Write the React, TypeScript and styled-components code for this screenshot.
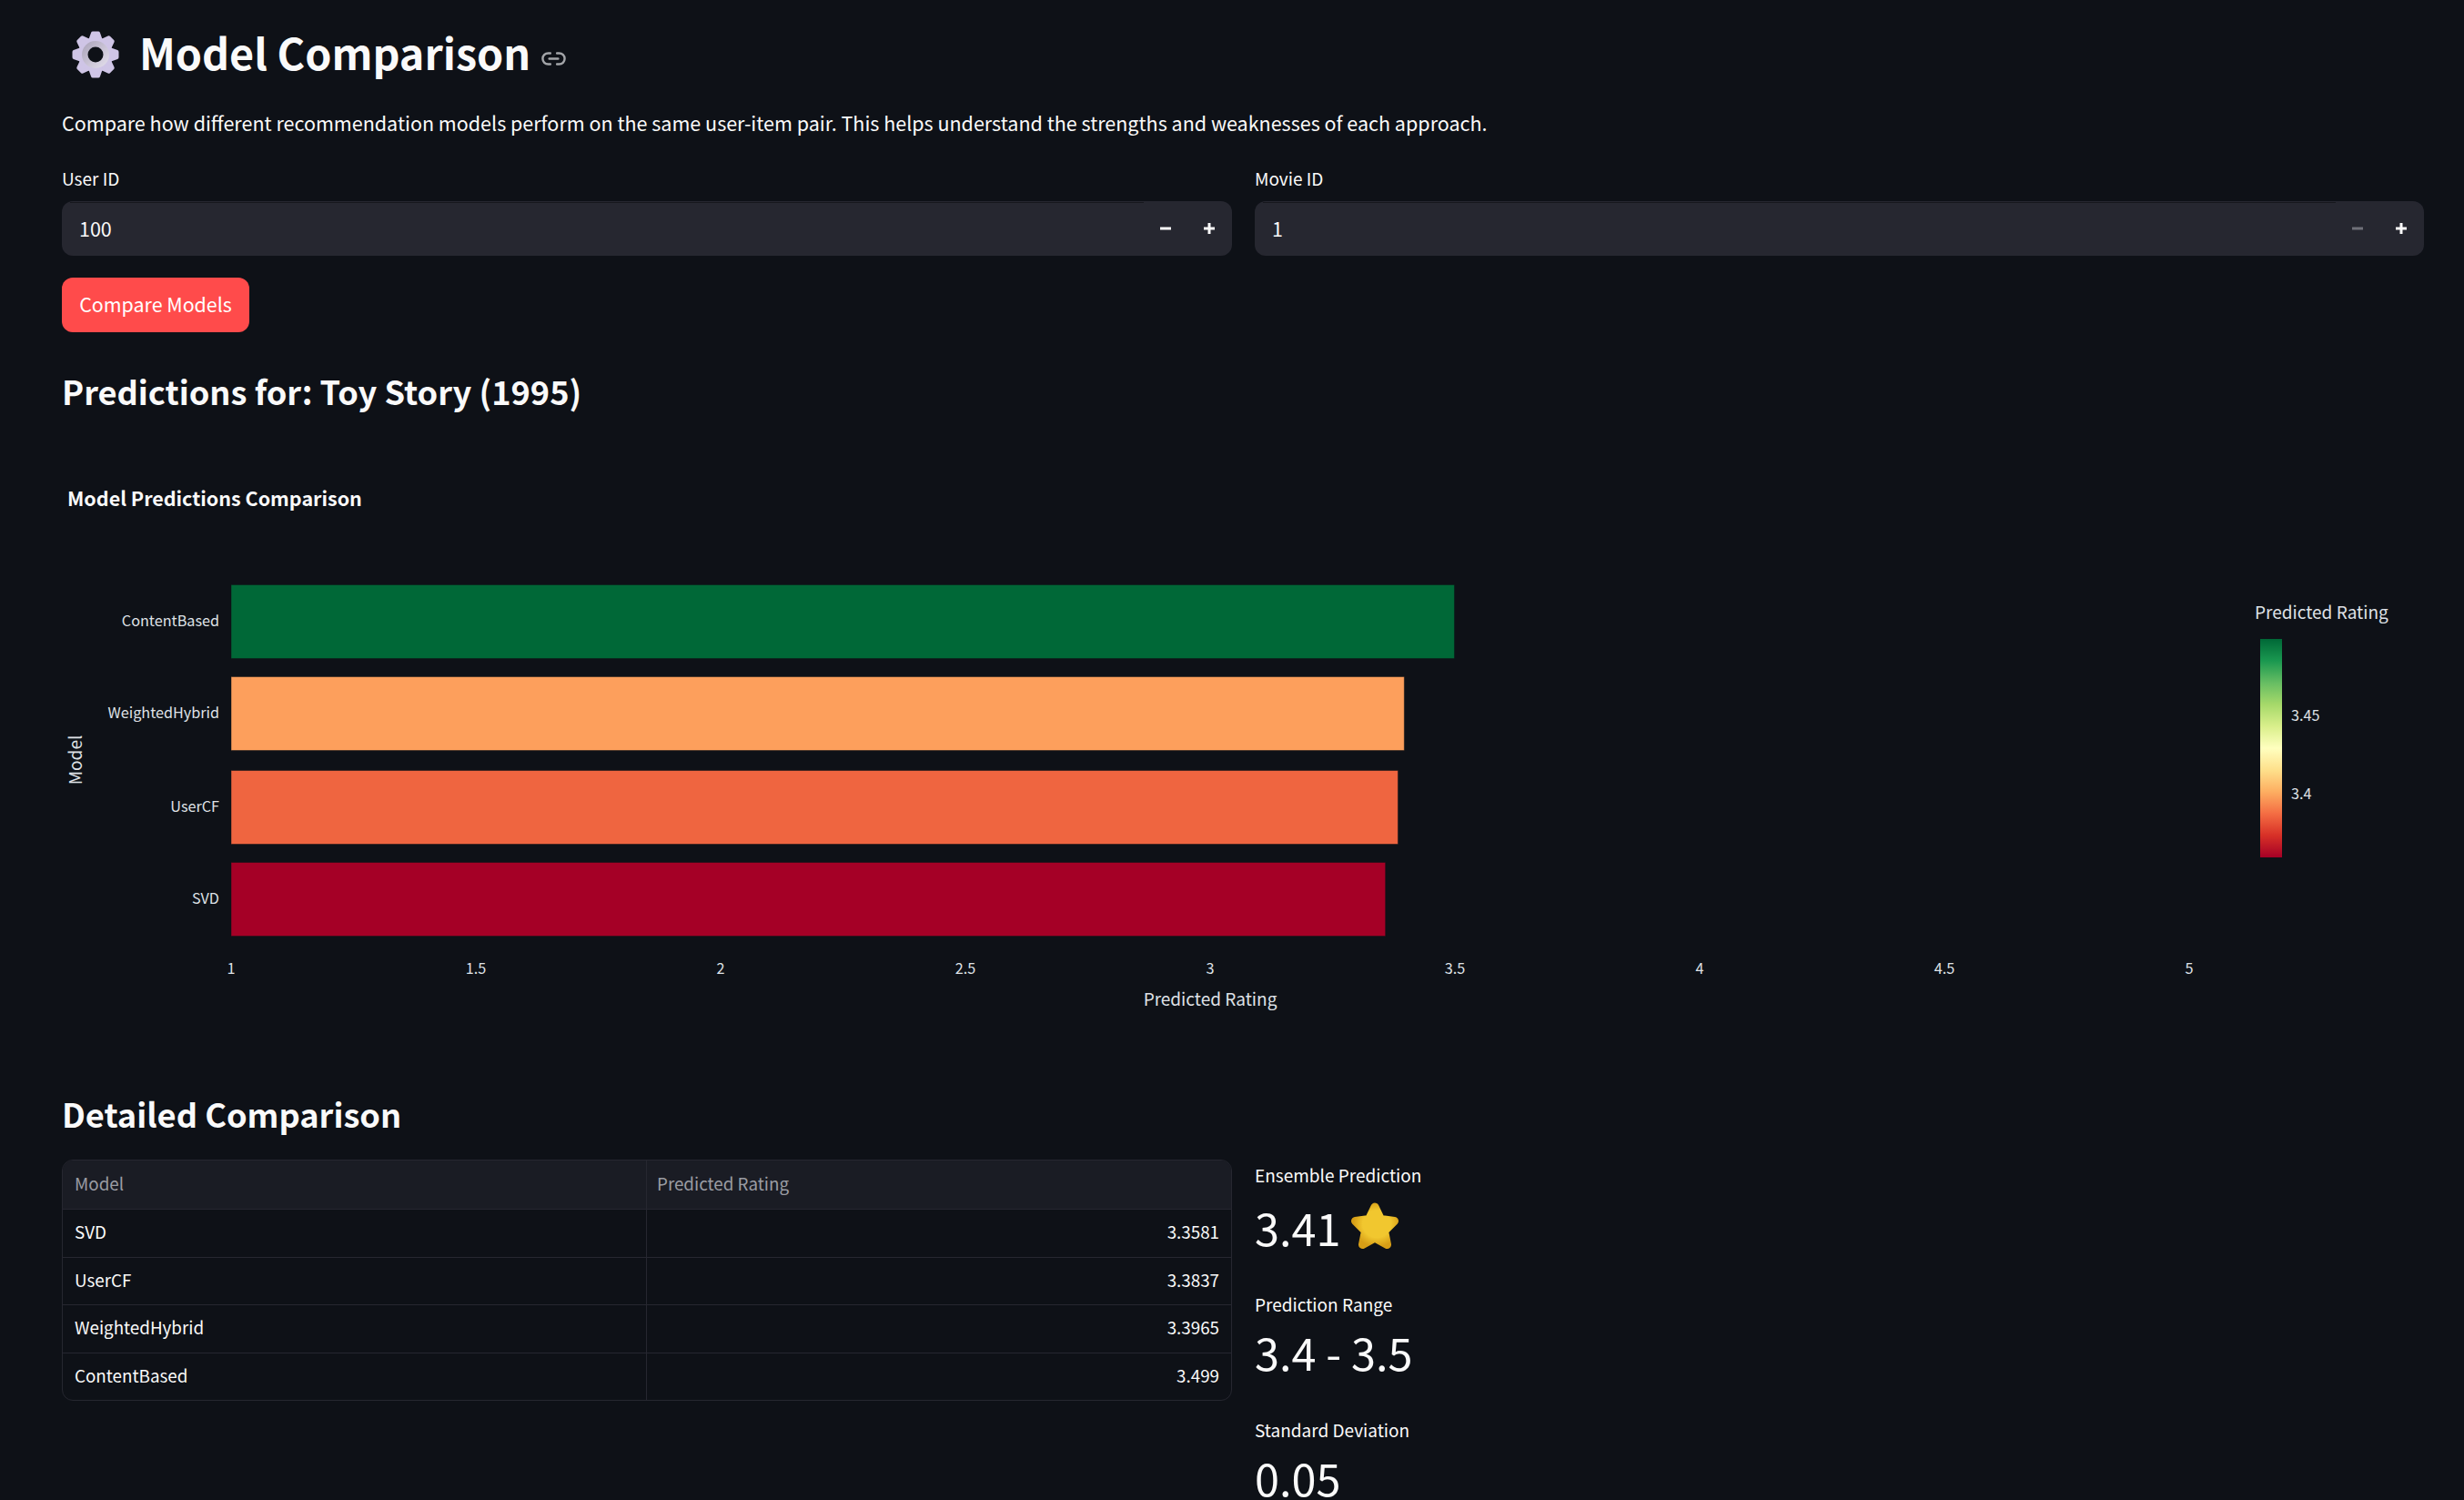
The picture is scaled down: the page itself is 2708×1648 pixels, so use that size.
import React from 'react'
import styled, { createGlobalStyle } from 'styled-components'
import { Link2 } from 'lucide-react'

const FONT = `"Noto Sans CJK SC", "Source Sans Pro", "Noto Sans", sans-serif`

const GlobalStyle = createGlobalStyle`
    html, body {
        margin: 0;
        height: 1648px;
        overflow: hidden;
        background: #0e1117;
    }
    body {
        color: #fafafa;
        font-family: ${FONT};
    }
`

const bars = [
    { name: 'ContentBased', value: 3.499, color: '#006837', top: 642 },
    { name: 'WeightedHybrid', value: 3.3965, color: '#fd9f5c', top: 743 },
    { name: 'UserCF', value: 3.3837, color: '#ef6540', top: 846 },
    { name: 'SVD', value: 3.3581, color: '#a50026', top: 947 },
]
const ticks = ['1', '1.5', '2', '2.5', '3', '3.5', '4', '4.5', '5']
const rows = [
    ['SVD', '3.3581'],
    ['UserCF', '3.3837'],
    ['WeightedHybrid', '3.3965'],
    ['ContentBased', '3.499'],
]
const legendStops = ['#006837', '#1a9850', '#66bd63', '#a6d96a', '#d9ef8b', '#ffffbf', '#fee08b', '#fdae61', '#f46d43', '#d73027', '#a50026']

const CHART_TOP = 500
const AXIS_X = (v: number) => 254 - 68 + (v - 1) * 538

function GearIcon() {
    return (
        <svg width="56" height="56" viewBox="-28 -28 56 56">
            <defs>
                <linearGradient id="ring" x1="0" y1="0" x2="1" y2="1">
                    <stop offset="0" stopColor="#a9a2b8" />
                    <stop offset="1" stopColor="#e6e1ee" />
                </linearGradient>
            </defs>
            <circle r="19" fill="#cdc2e4" />
            {[0, 45, 90, 135, 180, 225, 270, 315].map(a => (
                <polygon
                    key={a}
                    points="-6,-15 -3,-23.5 3,-23.5 6,-15"
                    fill="#cfc5e6"
                    stroke="#cfc5e6"
                    strokeWidth="4"
                    strokeLinejoin="round"
                    transform={`rotate(${a})`}
                />
            ))}
            <circle r="15" fill="url(#ring)" />
            <circle r="8.5" fill="#0e1117" />
        </svg>
    )
}

function StarIcon() {
    return (
        <svg width="56" height="56" viewBox="-28 -28 56 56">
            <defs>
                <radialGradient id="star" cx="0.55" cy="0.45" r="0.6">
                    <stop offset="0.6" stopColor="#f1c72f" />
                    <stop offset="1" stopColor="#d79e16" />
                </radialGradient>
            </defs>
            <polygon
                points="0,-22 6.5,-8.500 21.5,-6.500 10.5,4.500 13.5,19.500 0,12 -13.5,19.500 -10.5,4.500 -21.5,-6.500 -6.5,-8.500"
                fill="url(#star)"
                stroke="url(#star)"
                strokeWidth="9"
                strokeLinejoin="round"
            />
        </svg>
    )
}

function Chart() {
    return (
        <ChartSvg viewBox={`0 0 2596 640`} width="2596" height="640">
            <defs>
                <linearGradient id="legend" x1="0" y1="0" x2="0" y2="1">
                    {legendStops.map((c, i) => (
                        <stop key={c} offset={i / 10} stopColor={c} />
                    ))}
                </linearGradient>
            </defs>
            <ChartTitle x="6" y={548 - CHART_TOP + 8}>Model Predictions Comparison</ChartTitle>
            {bars.map(b => (
                <g key={b.name}>
                    <rect
                        x={AXIS_X(1)}
                        y={b.top - CHART_TOP + 0.5}
                        width={AXIS_X(b.value) - AXIS_X(1)}
                        height="81"
                        fill={b.color}
                        stroke="rgba(14,17,23,0.45)"
                        strokeWidth="1"
                    />
                    <TickText x={AXIS_X(1) - 13} y={b.top - CHART_TOP + 46} textAnchor="end">{b.name}</TickText>
                </g>
            ))}
            {ticks.map(t => (
                <TickText key={t} x={AXIS_X(Number(t))} y={1070 - CHART_TOP} textAnchor="middle">{t}</TickText>
            ))}
            <AxisText x={1262} y={1105 - CHART_TOP} textAnchor="middle">Predicted Rating</AxisText>
            <AxisText x={0} y={0} textAnchor="middle" transform={`translate(22 ${835 - CHART_TOP}) rotate(-90)`}>Model</AxisText>
            <AxisText x={2410} y={680 - CHART_TOP}>Predicted Rating</AxisText>
            <rect x={2416} y={702 - CHART_TOP} width="24" height="240" fill="url(#legend)" />
            <TickText x={2450} y={792 - CHART_TOP}>3.45</TickText>
            <TickText x={2450} y={878 - CHART_TOP}>3.4</TickText>
        </ChartSvg>
    )
}

function NumberField({ label, value, minusOff }: { label: string; value: string; minusOff?: boolean }) {
    return (
        <Field>
            <FieldLabel>{label}</FieldLabel>
            <InputBox>
                <InputValue>{value}</InputValue>
                <StepButton $off={minusOff}>
                    <svg width="12" height="12" viewBox="0 0 12 12"><rect x="0" y="4.5" width="12" height="3" fill="currentColor" /></svg>
                </StepButton>
                <StepButton>
                    <svg width="12" height="12" viewBox="0 0 12 12"><path d="M0 4.500h4.500V0h3v4.500H12v3H7.500V12h-3V7.500H0z" fill="currentColor" /></svg>
                </StepButton>
            </InputBox>
        </Field>
    )
}

export default function App() {
    return (
        <Page>
            <GlobalStyle />
            <TitleRow>
                <GearIcon />
                <Title>Model Comparison</Title>
                <LinkIcon><Link2 size={29} strokeWidth={2} /></LinkIcon>
            </TitleRow>
            <Intro>Compare how different recommendation models perform on the same user-item pair. This helps understand the strengths and weaknesses of each approach.</Intro>
            <Columns>
                <NumberField label="User ID" value="100" />
                <NumberField label="Movie ID" value="1" minusOff />
            </Columns>
            <CompareButton>Compare Models</CompareButton>
            <Heading>Predictions for: Toy Story (1995)</Heading>
            <Chart />
            <DetailHeading>Detailed Comparison</DetailHeading>
            <Columns>
                <Table>
                    <HeadRow>
                        <HeadCell>Model</HeadCell>
                        <HeadCell>Predicted Rating</HeadCell>
                    </HeadRow>
                    {rows.map(r => (
                        <BodyRow key={r[0]}>
                            <NameCell>{r[0]}</NameCell>
                            <NumCell>{r[1]}</NumCell>
                        </BodyRow>
                    ))}
                </Table>
                <Metrics>
                    <Metric>
                        <MetricLabel>Ensemble Prediction</MetricLabel>
                        <MetricValue $tall>3.41 <StarIcon /></MetricValue>
                    </Metric>
                    <Metric>
                        <MetricLabel>Prediction Range</MetricLabel>
                        <MetricValue>3.4 - 3.5</MetricValue>
                    </Metric>
                    <Metric>
                        <MetricLabel>Standard Deviation</MetricLabel>
                        <MetricValue>0.05</MetricValue>
                    </Metric>
                </Metrics>
            </Columns>
        </Page>
    )
}

const Page = styled.main`
    box-sizing: border-box;
    width: 2708px;
    height: 1648px;
    overflow: hidden;
    padding: 32px 44px 0 68px;
    background: #0e1117;
`
const TitleRow = styled.div`
    display: flex;
    align-items: center;
    height: 56px;
    padding-left: 9px;
`
const Title = styled.h1`
    margin: 0 0 0 20px;
    padding-bottom: 6px;
    font-size: 46.7px;
    font-weight: 600;
    line-height: 50px;
`
const LinkIcon = styled.span`
    display: flex;
    margin: 8px 0 0 11px;
    color: #a3a5a9;
`
const Intro = styled.p`
    margin: 31px 0 0;
    font-size: 21.5px;
    line-height: 32px;
`
const Columns = styled.div`
    display: grid;
    grid-template-columns: 1286px 1285px;
    gap: 25px;
`
const Field = styled.div`
    margin-top: 31px;
`
const FieldLabel = styled.div`
    font-size: 19px;
    line-height: 28px;
    margin-bottom: 11px;
`
const InputBox = styled.div`
    display: flex;
    align-items: center;
    height: 60px;
    padding-right: 1px;
    border-radius: 12px;
    background: #262730;
`
const InputValue = styled.span`
    flex: 1;
    display: flex;
    align-items: center;
    align-self: stretch;
    margin: 1px 0 0 9px;
    padding: 0 0 4px 10px;
    border-top: 1px solid #16171d;
    font-size: 21.5px;
`
const StepButton = styled.span<{ $off?: boolean }>`
    display: flex;
    align-items: center;
    justify-content: center;
    width: 48px;
    height: 60px;
    color: ${p => (p.$off ? '#6f7078' : '#fafafa')};
`
const CompareButton = styled.button`
    display: block;
    width: 206px;
    height: 60px;
    margin-top: 24px;
    padding: 0 0 3px;
    border: none;
    border-radius: 12px;
    background: #ff4b4b;
    color: #fff;
    font-family: ${FONT};
    font-size: 21.4px;
`
const Heading = styled.h2`
    margin: 36px 0 0;
    font-size: 36.2px;
    font-weight: 600;
    line-height: 56px;
`
const ChartSvg = styled.svg`
    display: block;
    margin-top: 43px;
    font-family: ${FONT};
`
const ChartTitle = styled.text`
    fill: #fafafa;
    font-size: 21.5px;
    font-weight: 700;
`
const TickText = styled.text`
    fill: #dfe1e6;
    font-size: 16.2px;
`
const AxisText = styled.text`
    fill: #dfe1e6;
    font-size: 19px;
`
const DetailHeading = styled.h2`
    margin: 55px 0 0;
    font-size: 36.2px;
    font-weight: 600;
    line-height: 56px;
`
const Table = styled.div`
    align-self: start;
    margin-top: 23px;
    border: 1px solid #262730;
    border-radius: 12px;
    overflow: hidden;
`
const HeadRow = styled.div`
    display: grid;
    grid-template-columns: 641px 1fr;
    height: 53px;
    background: #1a1c24;
`
const HeadCell = styled.div`
    padding-left: 13px;
    color: #9a9ca3;
    font-size: 18.8px;
    line-height: 50px;
    & + & {
        padding-left: 11px;
        border-left: 1px solid #262730;
    }
`
const BodyRow = styled.div`
    display: grid;
    grid-template-columns: 641px 1fr;
    height: 52.5px;
    border-top: 1px solid #262730;
    box-sizing: border-box;
`
const NameCell = styled.div`
    padding-left: 13px;
    font-size: 18.8px;
    line-height: 48px;
`
const NumCell = styled.div`
    padding-right: 13px;
    border-left: 1px solid #262730;
    font-size: 18.8px;
    line-height: 48px;
    text-align: right;
`
const Metrics = styled.div`
    display: flex;
    flex-direction: column;
    gap: 36px;
    margin-top: 22px;
`
const Metric = styled.div``
const MetricLabel = styled.div`
    margin-top: 2px;
    font-size: 19px;
    line-height: 32px;
`
const MetricValue = styled.div<{ $tall?: boolean }>`
    display: flex;
    align-items: center;
    gap: 10px;
    height: ${p => (p.$tall ? 62 : 64)}px;
    margin-top: ${p => (p.$tall ? 10 : 4)}px;
    font-size: 48.6px;
    line-height: 64px;
`
